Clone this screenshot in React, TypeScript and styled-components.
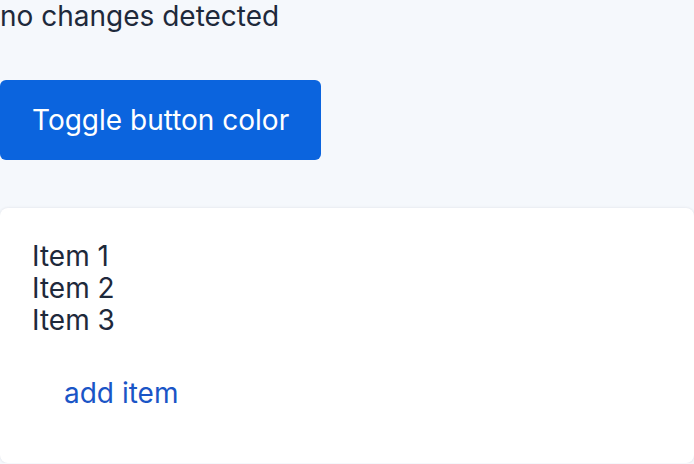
import React, { useState } from 'react';
import styled, { createGlobalStyle } from 'styled-components';

const GlobalStyle = createGlobalStyle`
  html, body {
    margin: 0;
    padding: 0;
    background: #f5f8fc;
  }
  body {
    font-family: Inter, 'Noto Sans', sans-serif;
    color: #1e293b;
  }
`;

const Page = styled('div')`
  display: flex;
  flex-direction: column;
  align-items: flex-start;
  gap: 48px;
  font-size: 28px;
  line-height: 32px;
`;

const Status = styled('div')`
  margin: 0;
`;

const ToggleButton = styled('button')<{ $alt: boolean }>`
  font: inherit;
  color: #fff;
  background: ${(p) => (p.$alt ? '#7c3aed' : '#0b64de')};
  border: none;
  border-radius: 6px;
  padding: 24px 32px;
  cursor: pointer;
`;

const Card = styled('div')`
  align-self: stretch;
  background: #fff;
  border-radius: 8px;
  box-shadow: 0 0 3px rgba(15, 23, 42, 0.1);
  padding: 32px 32px 46px;
`;

const List = styled('div')`
  display: flex;
  flex-direction: column;
`;

const LinkButton = styled('button')`
  font: inherit;
  color: #1a55c6;
  background: none;
  border: none;
  padding: 8px 32px;
  margin-top: 33px;
  cursor: pointer;
`;

const App: React.FunctionComponent = () => {
  const [alt, setAlt] = useState(false);
  const [items, setItems] = useState<string[]>(['Item 1', 'Item 2', 'Item 3']);
  return (
    <Page>
      <GlobalStyle />
      <Status>no changes detected</Status>
      <ToggleButton $alt={alt} onClick={() => setAlt(!alt)}>
        Toggle button color
      </ToggleButton>
      <Card>
        <List>
          {items.map((item) => (
            <div key={item}>{item}</div>
          ))}
        </List>
        <LinkButton onClick={() => setItems([...items, `Item ${items.length + 1}`])}>add item</LinkButton>
      </Card>
    </Page>
  );
};

export default App;
